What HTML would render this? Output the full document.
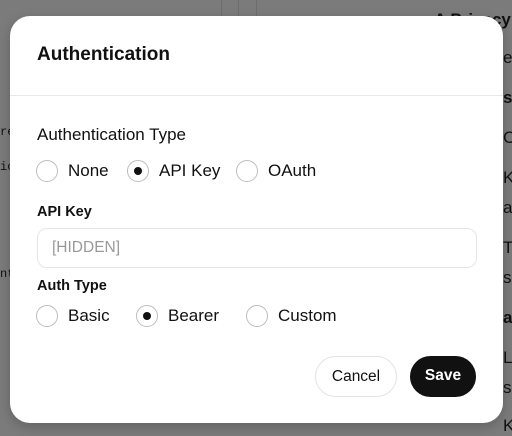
<!DOCTYPE html>
<html><head><style>
*{margin:0;padding:0;box-sizing:border-box}
body{width:512px;height:436px;background:#7b7b7b;position:relative;overflow:hidden;font-family:"Liberation Sans",Arial,sans-serif;color:#111}
.bg{position:absolute;color:#111;font-size:17px}
.vl{position:absolute;top:0;width:1px;height:16px;background:#6e6e6e}
.m{position:absolute;left:10px;top:16px;width:493px;height:407px;background:#fff;border-radius:20px;box-shadow:0 4px 12px rgba(0,0,0,.2)}
.t{position:absolute;left:27px;top:28px;font-size:19px;font-weight:bold}
.hr{position:absolute;left:0;right:0;top:79px;height:1px;background:#e8e8e8}
.a{position:absolute;font-size:17px}
.l{position:absolute;font-size:14.5px;font-weight:bold}
.r{position:absolute;width:22px;height:22px;border:1px solid #bdbdbd;border-radius:50%}
.r.on::after{content:"";position:absolute;left:6px;top:6px;width:8px;height:8px;border-radius:50%;background:#111}
.in{position:absolute;left:27px;top:212px;width:440px;height:40px;border:1px solid #e6e6e6;border-radius:10px;font-size:15.5px;color:#999;padding:10px 14px}
.btn{position:absolute;top:340px;height:41px;border-radius:21px;font-size:15.5px;text-align:center;line-height:40px}
</style></head><body>
<div class="vl" style="left:221px"></div><div class="vl" style="left:238px"></div><div class="vl" style="left:256px"></div>
<div class="bg" style="left:434px;top:10px;font-weight:bold">A Privacy</div>
<div class="bg" style="left:503px;top:48px">e</div>
<div class="bg" style="left:503px;top:88px;font-weight:bold">s</div>
<div class="bg" style="left:503px;top:128px">C</div>
<div class="bg" style="left:503px;top:168px">K</div>
<div class="bg" style="left:503px;top:198px">a</div>
<div class="bg" style="left:503px;top:238px">T</div>
<div class="bg" style="left:503px;top:268px">s</div>
<div class="bg" style="left:503px;top:308px;font-weight:bold">a</div>
<div class="bg" style="left:503px;top:348px">L</div>
<div class="bg" style="left:503px;top:378px">s</div>
<div class="bg" style="left:503px;top:416px">K</div>
<div class="bg" style="left:0;top:125px;font-size:12px;font-family:'Liberation Mono',monospace">re</div>
<div class="bg" style="left:0;top:160px;font-size:12px;font-family:'Liberation Mono',monospace">ic</div>
<div class="bg" style="left:0;top:267px;font-size:12px;font-family:'Liberation Mono',monospace">nt</div>
<div class="m">
<div class="t">Authentication</div>
<div class="hr"></div>
<div class="a" style="left:27px;top:109px">Authentication Type</div>
<div class="r" style="left:26px;top:144px"></div><div class="a" style="left:58px;top:145px">None</div>
<div class="r on" style="left:117px;top:144px"></div><div class="a" style="left:149px;top:145px">API Key</div>
<div class="r" style="left:226px;top:144px"></div><div class="a" style="left:258px;top:145px">OAuth</div>
<div class="l" style="left:27px;top:188px">API Key</div>
<div class="in">[HIDDEN]</div>
<div class="l" style="left:27px;top:262px">Auth Type</div>
<div class="r" style="left:26px;top:289px"></div><div class="a" style="left:58px;top:290px">Basic</div>
<div class="r on" style="left:126px;top:289px"></div><div class="a" style="left:158px;top:290px">Bearer</div>
<div class="r" style="left:236px;top:289px"></div><div class="a" style="left:268px;top:290px">Custom</div>
<div class="btn" style="left:305px;width:82px;border:1px solid #e3e3e3">Cancel</div>
<div class="btn" style="left:400px;width:66px;background:#111;color:#fff;font-weight:bold">Save</div>
</div>
</body></html>
